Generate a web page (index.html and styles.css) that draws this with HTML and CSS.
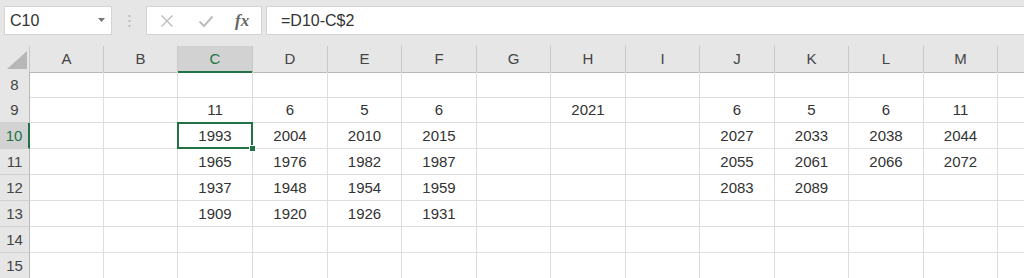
FILE: index.html
```html
<!DOCTYPE html>
<html lang="ja">
<head>
  <meta charset="UTF-8" />
  <title>Book1 - Excel</title>
  <link rel="stylesheet" href="styles.css">
</head>
<body>

  <div class="toolbar">
    <div class="namebox">
      <span>C10</span>
      <svg class="drop" width="7" height="4" viewBox="0 0 7 4"><path d="M0 0h7L3.5 4z" fill="#777"/></svg>
    </div>
    <div class="grip">
      <svg width="3" height="14" viewBox="0 0 3 14"><circle cx="1.5" cy="2" r="1.1" fill="#b5b5b5"/><circle cx="1.5" cy="7" r="1.1" fill="#b5b5b5"/><circle cx="1.5" cy="12" r="1.1" fill="#b5b5b5"/></svg>
    </div>
    <div class="fnbox">
      <svg width="14" height="14" viewBox="0 0 14 14"><path d="M1.5 1.5l11 11M12.5 1.5l-11 11" stroke="#bdbdbd" stroke-width="1.4" fill="none"/></svg>
      <svg width="16" height="14" viewBox="0 0 16 14"><path d="M1.5 7.5l4.5 4.5 8.5-9.5" stroke="#bdbdbd" stroke-width="2" fill="none"/></svg>
      <span class="fx">fx</span>
    </div>
    <div class="formula">=D10-C$2</div>
  </div>

  <div class="sheet">
    <div class="row head">
      <div class="corner"><svg width="20" height="18" viewBox="0 0 20 18"><path d="M20 0V18H0z" fill="#b7b7b7"/></svg></div>
      <div class="col">A</div><div class="col">B</div><div class="col sel">C</div><div class="col">D</div>
      <div class="col">E</div><div class="col">F</div><div class="col">G</div><div class="col">H</div>
      <div class="col">I</div><div class="col">J</div><div class="col">K</div><div class="col">L</div>
      <div class="col">M</div><div class="col"></div>
    </div>
    <div class="row first">
      <div class="num">8</div>
      <div class="c"></div><div class="c"></div><div class="c"></div><div class="c"></div><div class="c"></div><div class="c"></div><div class="c"></div>
      <div class="c"></div><div class="c"></div><div class="c"></div><div class="c"></div><div class="c"></div><div class="c"></div><div class="c"></div>
    </div>
    <div class="row">
      <div class="num">9</div>
      <div class="c"></div><div class="c"></div><div class="c">11</div><div class="c">6</div><div class="c">5</div><div class="c">6</div><div class="c"></div>
      <div class="c">2021</div><div class="c"></div><div class="c">6</div><div class="c">5</div><div class="c">6</div><div class="c">11</div><div class="c"></div>
    </div>
    <div class="row">
      <div class="num sel">10</div>
      <div class="c"></div><div class="c"></div><div class="c active">1993</div><div class="c">2004</div><div class="c">2010</div><div class="c">2015</div><div class="c"></div>
      <div class="c"></div><div class="c"></div><div class="c">2027</div><div class="c">2033</div><div class="c">2038</div><div class="c">2044</div><div class="c"></div>
    </div>
    <div class="row">
      <div class="num">11</div>
      <div class="c"></div><div class="c"></div><div class="c">1965</div><div class="c">1976</div><div class="c">1982</div><div class="c">1987</div><div class="c"></div>
      <div class="c"></div><div class="c"></div><div class="c">2055</div><div class="c">2061</div><div class="c">2066</div><div class="c">2072</div><div class="c"></div>
    </div>
    <div class="row">
      <div class="num">12</div>
      <div class="c"></div><div class="c"></div><div class="c">1937</div><div class="c">1948</div><div class="c">1954</div><div class="c">1959</div><div class="c"></div>
      <div class="c"></div><div class="c"></div><div class="c">2083</div><div class="c">2089</div><div class="c"></div><div class="c"></div><div class="c"></div>
    </div>
    <div class="row">
      <div class="num">13</div>
      <div class="c"></div><div class="c"></div><div class="c">1909</div><div class="c">1920</div><div class="c">1926</div><div class="c">1931</div><div class="c"></div>
      <div class="c"></div><div class="c"></div><div class="c"></div><div class="c"></div><div class="c"></div><div class="c"></div><div class="c"></div>
    </div>
    <div class="row">
      <div class="num">14</div>
      <div class="c"></div><div class="c"></div><div class="c"></div><div class="c"></div><div class="c"></div><div class="c"></div><div class="c"></div>
      <div class="c"></div><div class="c"></div><div class="c"></div><div class="c"></div><div class="c"></div><div class="c"></div><div class="c"></div>
    </div>
    <div class="row">
      <div class="num">15</div>
      <div class="c"></div><div class="c"></div><div class="c"></div><div class="c"></div><div class="c"></div><div class="c"></div><div class="c"></div>
      <div class="c"></div><div class="c"></div><div class="c"></div><div class="c"></div><div class="c"></div><div class="c"></div><div class="c"></div>
    </div>
  </div>

</body>
</html>
```

FILE: styles.css
```css
body {
  margin: 0;
  font-family: 'Liberation Sans', 'Noto Sans CJK JP', sans-serif;
  background: #fff;
  color: #333;
  overflow: hidden;
}
.toolbar {
  display: flex;
  align-items: center;
  height: 46px;
  padding: 0 0 5px 4px;
  box-sizing: border-box;
  background: #e6e6e6;
}
.namebox, .fnbox, .formula {
  height: 29px;
  box-sizing: border-box;
  background: #fff;
  border: 1px solid #d4d4d4;
}
.namebox {
  width: 108px;
  display: flex;
  align-items: center;
  justify-content: space-between;
  padding: 0 6px 0 5px;
  font-size: 16px;
}
.namebox .drop { margin-bottom: 1px; }
.grip {
  width: 34px;
  display: flex;
  justify-content: center;
}
.fnbox {
  width: 116px;
  display: flex;
  align-items: center;
  padding-left: 13px;
  gap: 24px;
}
.fx {
  font-family: 'Liberation Serif', serif;
  font-style: italic;
  font-weight: bold;
  font-size: 17px;
  color: #666;
  margin-left: -3px;
}
.formula {
  flex: 1;
  margin-left: 4px;
  border-right: none;
  padding-left: 14px;
  font-size: 16px;
  line-height: 27px;
}
.row {
  display: grid;
  grid-template-columns: 30px 74px 74px 75px 75px 74px 75px 74px 75px 74px 75px 74px 75px 74px 60px;
  height: 26px;
}
.row.first { height: 25px; }
.row > div {
  box-sizing: border-box;
  border-right: 1px solid #dedede;
  border-bottom: 1px solid #dedede;
  text-align: center;
  font-size: 15px;
  line-height: 25px;
}
.head { background: #e6e6e6; }
.head > div {
  border-right: 1px solid #c9c9c9;
  border-bottom: 1px solid #b8b8b8;
  color: #444;
}
.corner {
  display: flex;
  align-items: flex-end;
  justify-content: flex-end;
  padding: 0 2px 3px 0;
}
.col.sel {
  background: #d2d2d2;
  color: #217346;
  border-bottom: 2px solid #217346;
}
.num {
  background: #e6e6e6;
  color: #444;
}
.row > .num {
  border-right: 1px solid #b8b8b8;
  border-bottom: 1px solid #d0d0d0;
}
.row > .num.sel {
  background: #d2d2d2;
  color: #217346;
  border-right: 2px solid #217346;
}
.c.active {
  position: relative;
}
.c.active::after {
  content: "";
  position: absolute;
  left: -1px;
  top: -1px;
  right: -1px;
  bottom: -1px;
  border: 2px solid #217346;
}
.c.active::before {
  content: "";
  position: absolute;
  right: -4px;
  bottom: -4px;
  width: 5px;
  height: 5px;
  background: #217346;
  border: 1px solid #fff;
  z-index: 1;
}
```
